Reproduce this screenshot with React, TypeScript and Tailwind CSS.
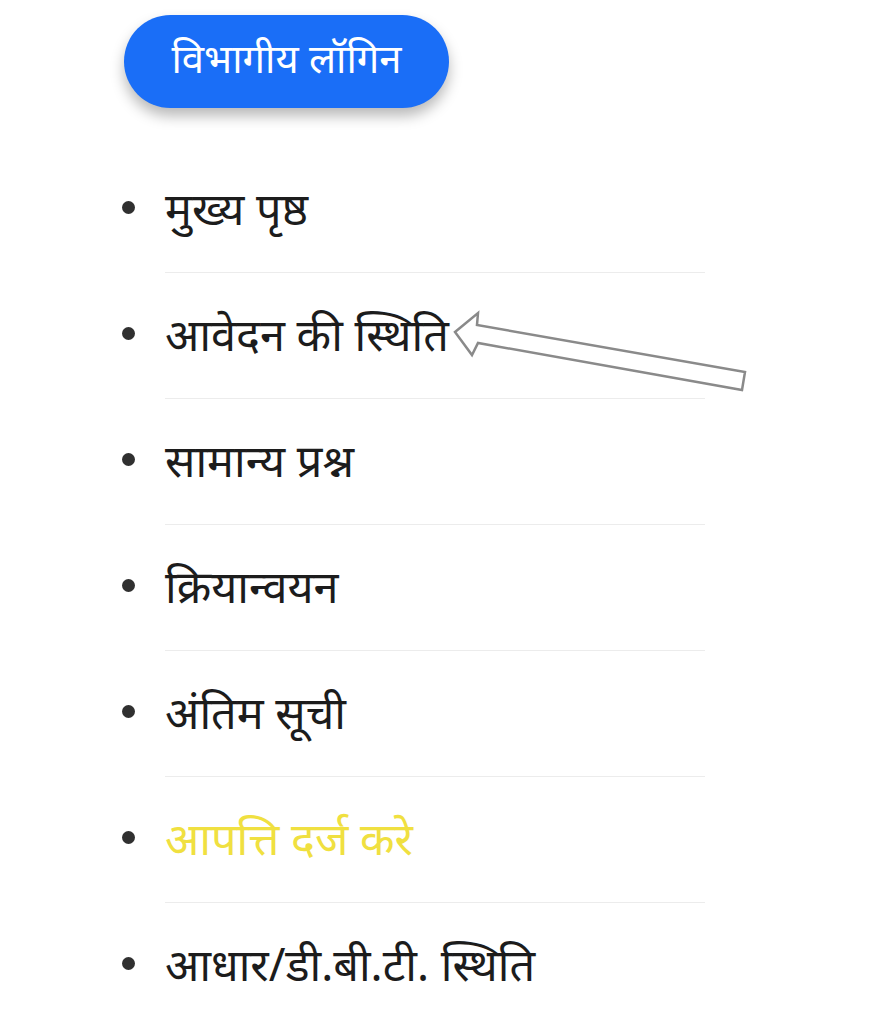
import React from 'react';

const items = [
  { label: 'मुख्य पृष्ठ' },
  { label: 'आवेदन की स्थिति', arrow: true },
  { label: 'सामान्य प्रश्न' },
  { label: 'क्रियान्वयन' },
  { label: 'अंतिम सूची' },
  { label: 'आपत्ति दर्ज करे', highlight: true },
  { label: 'आधार/डी.बी.टी. स्थिति' },
];

const PointerArrow = () => (
  <svg
    className="absolute left-[448px] top-[306px] w-[305px] h-[92px] pointer-events-none"
    viewBox="448 306 305 92"
    fill="none"
  >
    <path
      d="M455 332 L478 313 L477 325 L745 372 L742 390 L478 343 L472 355 Z"
      fill="#ffffff"
      stroke="#8a8a8a"
      strokeWidth={2.5}
      strokeLinejoin="miter"
    />
  </svg>
);

export default function App() {
  return (
    <div className="relative w-[893px] h-[1024px] overflow-hidden bg-white font-['Noto_Sans',sans-serif]">
      {/* Login button */}
      <div className="pl-[124px] pt-[15px]">
        <button className="w-[325px] h-[93px] rounded-full bg-[#1a6ef7] text-white text-[40px] leading-none pb-[8px] shadow-[0_8px_14px_rgba(0,0,0,0.28)]">
          विभागीय लॉगिन
        </button>
      </div>

      {/* Menu list */}
      <ul className="mt-[39px] pl-[122px]">
        {items.map((item) => (
          <li key={item.label} className="flex items-center h-[126px]">
            <span className="w-[43px] flex items-center">
              <span className="block w-[13px] h-[13px] -mt-[6px] rounded-full bg-[#303030]" />
            </span>
            <div className="w-[540px] h-full flex items-center border-b border-[#ececec]">
              <span
                className={
                  item.highlight
                    ? 'text-[45px] leading-none -mt-[4px] text-[#f0e040]'
                    : 'text-[45px] leading-none -mt-[4px] text-[#1c1c1c]'
                }
              >
                {item.label}
              </span>
            </div>
          </li>
        ))}
      </ul>

      <PointerArrow />
    </div>
  );
}
